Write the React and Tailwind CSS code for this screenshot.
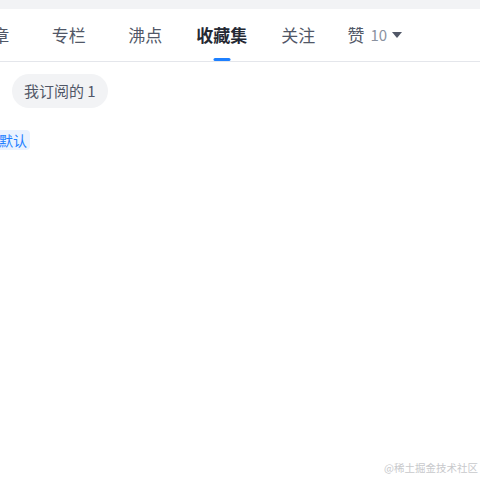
import React from "react";

const tabs = ["文章", "专栏", "沸点", "收藏集", "关注"];

const App = () => {
  const active = "收藏集";

  return (
    <div
      className="relative w-[480px] h-[480px] overflow-hidden bg-white"
      style={{ fontFamily: '"Noto Sans CJK SC", "Noto Sans", sans-serif' }}
    >
      <div className="h-[9px] bg-[#f2f3f5]" />

      <div className="flex h-[53px] border-b border-[#e4e6eb] ml-[-46px]">
        {tabs.map((t) => (
          <div
            key={t}
            className={
              t === active
                ? "relative w-[76.5px] shrink-0 flex items-center justify-center text-[17px] font-bold text-[#252933]"
                : "relative w-[76.5px] shrink-0 flex items-center justify-center text-[17px] text-[#515767]"
            }
          >
            {t}
            {t === active && (
              <span className="absolute bottom-0 left-1/2 -translate-x-1/2 w-[17px] h-[3px] rounded-sm bg-[#1e80ff]" />
            )}
          </div>
        ))}
        <div className="w-[76.5px] shrink-0 flex items-center justify-center text-[17px] text-[#515767]">
          <span>赞</span>
          <span className="ml-[6px] text-[15px] text-[#8a919f]">10</span>
          <svg className="ml-[5px]" width="10" height="6" viewBox="0 0 10 6">
            <path d="M0 0h10L5 6z" fill="#515767" />
          </svg>
        </div>
      </div>

      <div className="pl-3 pt-3">
        <div className="inline-flex items-center h-[34px] px-3 rounded-full bg-[#f2f3f5] text-[15px] text-[#515767]">
          我订阅的 1
        </div>
      </div>

      <div className="mt-[19px] ml-[-4px]">
        <span className="inline-block px-[3px] h-5 leading-5 text-[14px] text-[#1e80ff] bg-[#eaf2ff] rounded-sm">
          默认
        </span>
      </div>

      <div className="absolute right-[2px] bottom-[7px] text-[10.5px] leading-none text-[#c8c9cc] [text-shadow:0_0_1px_#fff]">
        @稀土掘金技术社区
      </div>
    </div>
  );
};

export default App;
